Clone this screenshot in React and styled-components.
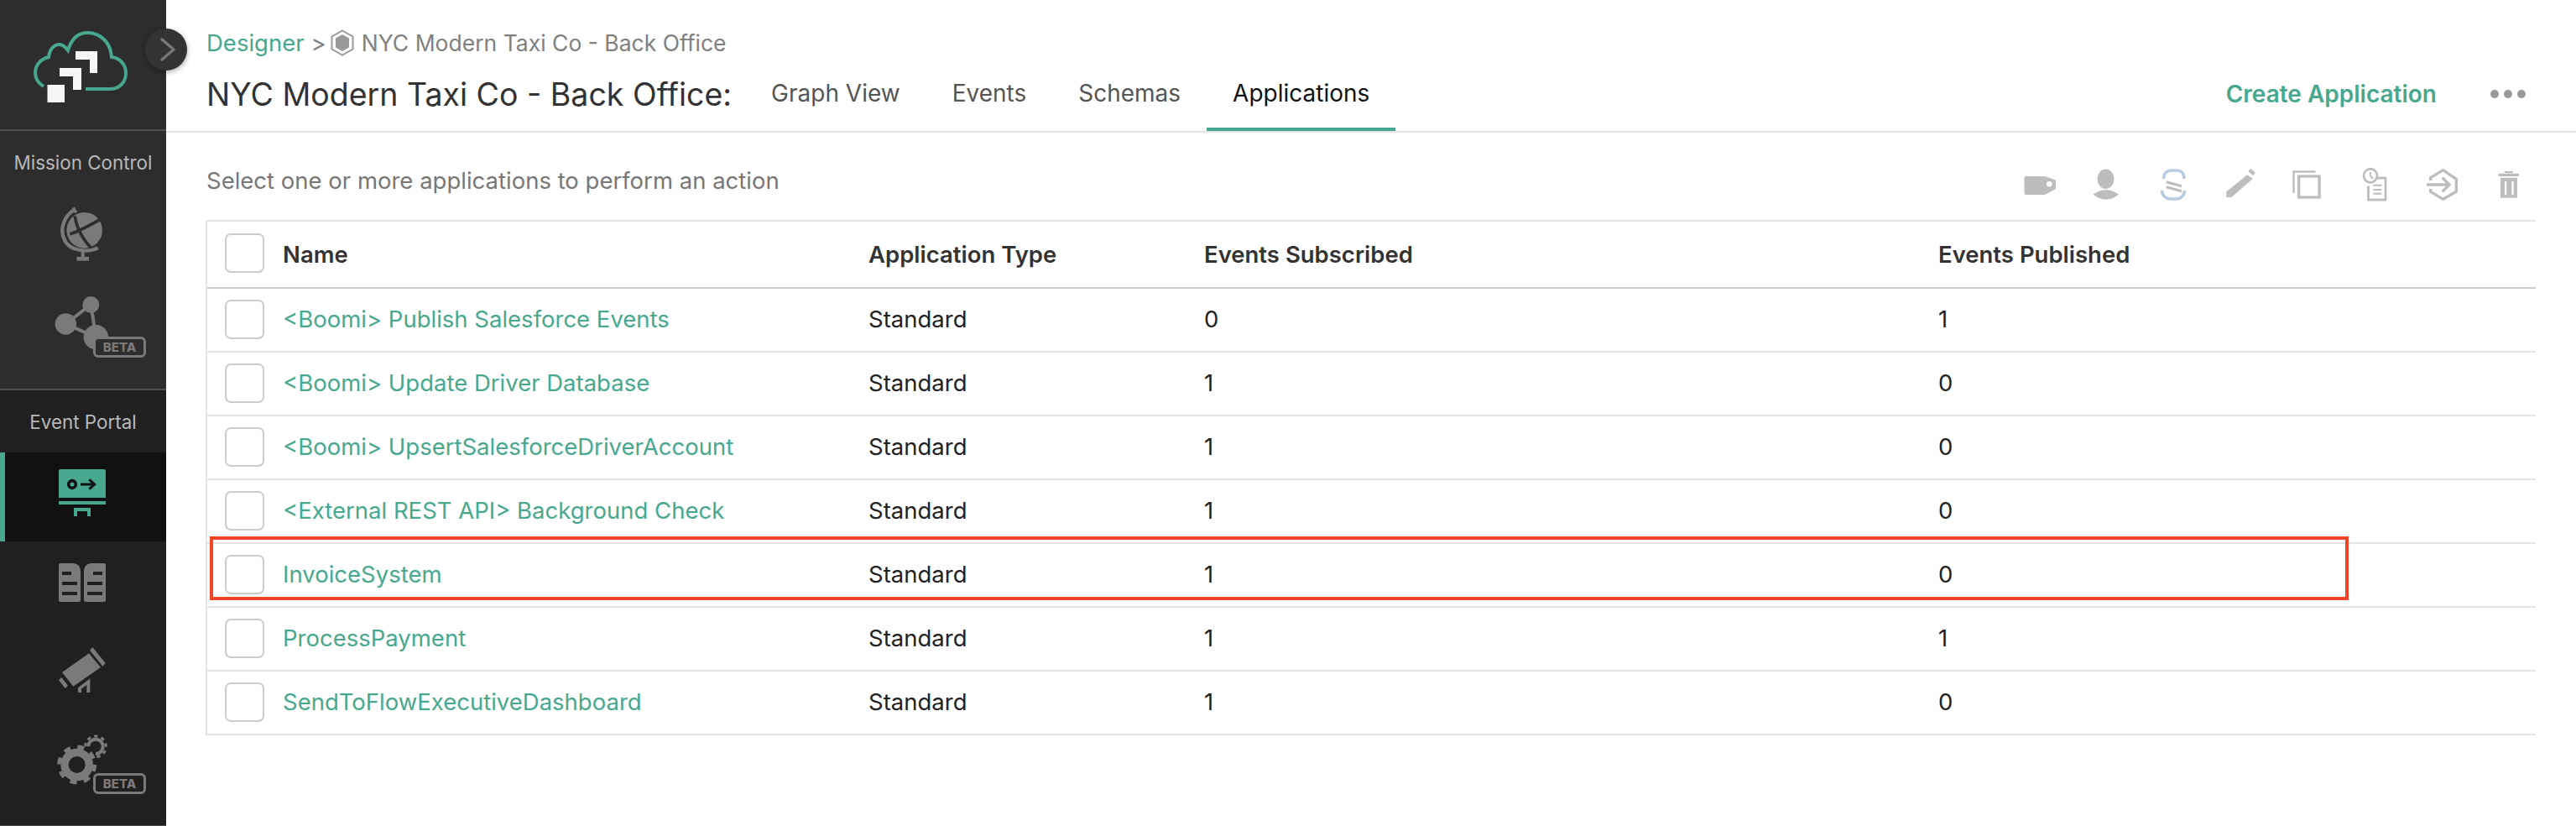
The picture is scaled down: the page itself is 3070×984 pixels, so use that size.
import React from "react"
import styled, { createGlobalStyle } from "styled-components"

const GREEN = "#47a88f"
const ICON_GREY = "#7a7a7a"
const TOOL_GREY = "#bdbdbd"
const FONT = `Inter, "Liberation Sans", sans-serif`

const GlobalStyle = createGlobalStyle`
  html, body {
    margin: 0;
    background: #fff;
    overflow: hidden;
  }
  body {
    font-family: ${FONT};
    color: #333;
  }
  * {
    box-sizing: border-box;
  }
`

const rows = [
  { name: "<Boomi> Publish Salesforce Events", subscribed: 0, published: 1 },
  { name: "<Boomi> Update Driver Database", subscribed: 1, published: 0 },
  { name: "<Boomi> UpsertSalesforceDriverAccount", subscribed: 1, published: 0 },
  { name: "<External REST API> Background Check", subscribed: 1, published: 0 },
  { name: "InvoiceSystem", subscribed: 1, published: 0 },
  { name: "ProcessPayment", subscribed: 1, published: 1 },
  { name: "SendToFlowExecutiveDashboard", subscribed: 1, published: 0 },
]

const tabs = ["Graph View", "Events", "Schemas", "Applications"]

/* sidebar drawings: the viewBox is in 3x page units, so shapes line up with the crops */
const CloudLogo = () => (
  <svg width="198" height="155" viewBox="0 0 198 155">
    <path
      d="M52 103 C44 98 42 92 42 87 C42 77 49 70 58 68 C59 59 64 53 71 53 C75 53 78 56 81 60 C85 47 93 39 104 39 C121 39 132 52 133 68 C143 69 150 77 150 87 C150 98 142 106 132 106 L102 106"
      fill="none"
      stroke={GREEN}
      strokeWidth="4"
    />
    <rect x="56.5" y="101" width="20.5" height="21" fill="#f5f5f5" />
    <polygon points="71,81 97,81 97,107 87,107 87,91 71,91" fill="#f5f5f5" />
    <polygon points="90,61 116,61 116,87 107,87 107,71 90,71" fill="#f5f5f5" />
  </svg>
)

const GlobeIcon = () => (
  <svg width="100" height="90" viewBox="147 702 300 270">
    <circle cx="302" cy="823" r="64" fill={ICON_GREY} />
    <path d="M268 748 C230 770 210 820 232 860 C250 895 310 905 350 886" fill="none" stroke={ICON_GREY} strokeWidth="13" />
    <path d="M262 742 L272 760" stroke={ICON_GREY} strokeWidth="10" />
    <path d="M250 836 C285 826 330 800 365 780" fill="none" stroke="#2d2d2d" strokeWidth="11" />
    <path d="M268 772 C272 810 295 855 325 885" fill="none" stroke="#2d2d2d" strokeWidth="11" />
    <rect x="290" y="892" width="12" height="30" fill={ICON_GREY} />
    <rect x="274" y="918" width="44" height="14" fill={ICON_GREY} />
  </svg>
)

const NetworkIcon = () => (
  <svg width="100" height="90" viewBox="147 1020 300 270">
    <path d="M235 1158 L325 1088 L343 1205 Z" fill="none" stroke={ICON_GREY} strokeWidth="12" />
    <circle cx="325" cy="1089" r="30" fill={ICON_GREY} />
    <circle cx="235" cy="1158" r="38" fill={ICON_GREY} />
    <circle cx="343" cy="1205" r="44" fill={ICON_GREY} />
  </svg>
)

const ApplicationIcon = () => (
  <svg width="100" height="90" viewBox="147 201 300 270">
    <path d="M210 243 a6 6 0 0 1 6 -6 H372 a6 6 0 0 1 6 6 V339 H210 Z" fill={GREEN} />
    <circle cx="258" cy="291" r="13" fill={GREEN} stroke="#111" strokeWidth="11" />
    <path d="M288 291 H332" stroke="#111" strokeWidth="9" />
    <path d="M319 274 L338 291 L319 308" fill="none" stroke="#111" strokeWidth="9" />
    <rect x="210" y="351" width="168" height="12" fill={GREEN} />
    <polygon points="264,375 324,375 324,405 312,405 312,387 276,387 276,405 264,405" fill={GREEN} />
  </svg>
)

const CatalogIcon = () => (
  <svg width="100" height="90" viewBox="147 519 300 270">
    <path d="M216 573 H262 a26 26 0 0 1 26 26 V705 a6 6 0 0 1 -6 6 H216 a6 6 0 0 1 -6 -6 V579 a6 6 0 0 1 6 -6 Z" fill={ICON_GREY} />
    <path d="M372 573 H326 a26 26 0 0 0 -26 26 V705 a6 6 0 0 0 6 6 H372 a6 6 0 0 0 6 -6 V579 a6 6 0 0 0 -6 -6 Z" fill={ICON_GREY} />
    <g fill="#202020">
      <rect x="222" y="603" width="33" height="12" />
      <rect x="222" y="639" width="54" height="12" />
      <rect x="222" y="675" width="54" height="12" />
      <rect x="333" y="603" width="33" height="12" />
      <rect x="312" y="639" width="54" height="12" />
      <rect x="312" y="675" width="54" height="12" />
    </g>
  </svg>
)

const TelescopeIcon = () => (
  <svg width="100" height="90" viewBox="147 837 300 270">
    <g fill={ICON_GREY}>
      <polygon points="222,963 318,895 360,945 262,1013" />
      <polygon points="331,873 377,930 367,941 321,884" />
      <polygon points="220,981 243,1010 233,1020 210,990" />
      <polygon points="279,1035 279,1018 322,985 322,1035 310,1035 310,1008 291,1022 291,1035" />
    </g>
  </svg>
)

const DesignerIcon = () => (
  <svg width="100" height="90" viewBox="147 1155 300 270">
    <g fill="none" stroke={ICON_GREY}>
      <circle cx="275" cy="1293" r="44" strokeWidth="28" />
      <circle cx="275" cy="1293" r="63" strokeWidth="15" strokeDasharray="24 25.5" />
      <path d="M316 1228 A26 26 0 1 1 342 1254" strokeWidth="12" />
      <path d="M305 1228 A37 37 0 1 1 342 1265" strokeWidth="9" strokeDasharray="13 13" />
    </g>
  </svg>
)

const ChevronRight = () => (
  <svg width="50" height="50" viewBox="0 0 50 50">
    <path d="M20 13 L34 25 L20 37" fill="none" stroke="#777" strokeWidth="3.5" strokeLinecap="round" strokeLinejoin="round" />
  </svg>
)

const HexBadge = () => (
  <svg width="28" height="32" viewBox="0 0 28 32">
    <polygon points="14,1.5 26.5,8.5 26.5,23.5 14,30.5 1.5,23.5 1.5,8.5" fill="none" stroke="#999" strokeWidth="2" />
    <polygon points="14,6 22,10.5 22,21.5 14,26 6,21.5 6,10.5" fill="#999" />
  </svg>
)

/* toolbar drawings */
const toolIcons = [
  <g key="tag">
    <path d="M2.5 12 a2 2 0 0 1 2 -2 H27 L40 14.5 V25 L27 32 H4.5 a2 2 0 0 1 -2 -2 Z" fill={TOOL_GREY} />
    <circle cx="32.3" cy="19.3" r="3.3" fill="#fff" />
  </g>,
  <g key="owner" fill={TOOL_GREY}>
    <ellipse cx="19.5" cy="13.3" rx="10" ry="11.7" />
    <path d="M4.5 31.5 Q20 21 35 31.5 Q20 44 4.5 31.5 Z" />
  </g>,
  <g key="link">
    <path d="M8.5 13 C8.5 6 13 3 18 3 H24 C29 3 33 6 33 13" fill="none" stroke="#b9cbe3" strokeWidth="3.5" />
    <path d="M6.5 27 C6.5 33 11 37 18 37 H23 C29 37 33.5 33 33.5 27" fill="none" stroke="#b9cbe3" strokeWidth="3.5" />
    <path d="M11.7 16.7 L30 21.7 M11.7 22.7 L30 27.7" stroke={TOOL_GREY} strokeWidth="3" />
  </g>,
  <g key="edit" fill={TOOL_GREY}>
    <polygon points="3.3,35 3.3,28.3 28.3,8.3 35,12.7 9.3,35" />
    <polygon points="29.3,4 32.7,0.7 37.7,6 35,9.3" />
  </g>,
  <g key="copy" fill="none" stroke={TOOL_GREY}>
    <path d="M3.5 30 V4.5 H29.5" strokeWidth="2.5" />
    <rect x="9.7" y="10" width="24.4" height="25" strokeWidth="3.3" />
  </g>,
  <g key="history" fill="none" stroke={TOOL_GREY}>
    <path d="M23 12 H33 V38 H12.5 V21.7" strokeWidth="2.8" strokeLinejoin="round" />
    <circle cx="15" cy="9.3" r="8" fill="#fff" strokeWidth="2.7" />
    <path d="M15 5 V9.5 L18 13" strokeWidth="2" />
    <path d="M18.3 20.7 H28.3 M18.3 26 H28.3 M18.3 30.7 H28.3" strokeWidth="2" />
  </g>,
  <g key="import" fill="none" stroke={TOOL_GREY} strokeWidth="3.3">
    <path d="M6.7 15 V11.7 L21.7 2.7 L37.3 13.3 V28.3 L21.7 37.3 L6.7 28.3 V25" />
    <path d="M2 20 H28 M20.7 11.7 L29 20 L20.7 28.3" />
  </g>,
  <g key="delete" fill={TOOL_GREY}>
    <rect x="15" y="4" width="10" height="2" />
    <rect x="7.7" y="6.7" width="24.3" height="3.3" />
    <path d="M10 11.7 H30 V35.7 H10 Z M15 16 V32.3 H17.3 V16 Z M23.3 16 V32.3 H25.7 V16 Z" fillRule="evenodd" />
  </g>,
]

const App = () => (
  <Page>
    <GlobalStyle />
    <Sidebar>
      <LogoBlock>
        <CloudLogo />
      </LogoBlock>
      <MissionSection>
        <SectionTitle $height={70}>Mission Control</SectionTitle>
        <NavItem>
          <GlobeIcon />
        </NavItem>
        <NavItem>
          <NetworkIcon />
          <BetaBadge $top={69} $bg="#2d2d2d">BETA</BetaBadge>
        </NavItem>
      </MissionSection>
      <PortalSection>
        <SectionTitle $height={74}>Event Portal</SectionTitle>
        <NavItem $active>
          <ApplicationIcon />
        </NavItem>
        <NavItem>
          <CatalogIcon />
        </NavItem>
        <NavItem>
          <TelescopeIcon />
        </NavItem>
        <NavItem>
          <DesignerIcon />
          <BetaBadge $top={64} $bg="#202020">BETA</BetaBadge>
        </NavItem>
      </PortalSection>
    </Sidebar>
    <Toggle>
      <ChevronRight />
    </Toggle>
    <Main>
      <Header>
        <Breadcrumb>
          <Crumb>Designer</Crumb>
          <Sep>&gt;</Sep>
          <HexBadge />
          <CrumbTitle>NYC Modern Taxi Co - Back Office</CrumbTitle>
        </Breadcrumb>
        <TitleRow>
          <Title>NYC Modern Taxi Co - Back Office:</Title>
          {tabs.map((tab) => (
            <Tab key={tab} $active={tab === "Applications"}>
              {tab}
            </Tab>
          ))}
          <Actions>
            <CreateLink>Create Application</CreateLink>
            <Dots>
              <i />
              <i />
              <i />
            </Dots>
          </Actions>
        </TitleRow>
      </Header>
      <Toolbar>
        <Hint>Select one or more applications to perform an action</Hint>
        <ToolIcons>
          {toolIcons.map((icon) => (
            <svg key={icon.key} width="40" height="40" viewBox="0 0 40 40">
              {icon}
            </svg>
          ))}
        </ToolIcons>
      </Toolbar>
      <Table>
        <HeadRow>
          <HeadCheck />
          <div>Name</div>
          <div>Application Type</div>
          <div>Events Subscribed</div>
          <div>Events Published</div>
        </HeadRow>
        {rows.map((row) => (
          <Row key={row.name}>
            <Check />
            <NameLink>{row.name}</NameLink>
            <div>Standard</div>
            <div>{row.subscribed}</div>
            <div>{row.published}</div>
          </Row>
        ))}
        <Highlight />
      </Table>
    </Main>
  </Page>
)

const Page = styled.div`
  display: flex;
  position: relative;
  width: 3070px;
  height: 984px;
`

const Sidebar = styled.nav`
  width: 198px;
  flex: none;
  display: flex;
  flex-direction: column;
  background: #202020;
  color: #b8b8b8;
`

const LogoBlock = styled.div`
  height: 156px;
  background: #2d2d2d;
  border-bottom: 2px solid #505050;
`

const MissionSection = styled.div`
  height: 309px;
  background: #2d2d2d;
  border-bottom: 2px solid #505050;
`

const PortalSection = styled.div`
  flex: 1;
  border-bottom: 1px solid #505050;
`

const SectionTitle = styled.div`
  height: ${(p) => p.$height}px;
  padding-top: ${(p) => (p.$height === 70 ? 4 : 0)}px;
  display: flex;
  align-items: center;
  justify-content: center;
  font-size: 22.4px;
  white-space: nowrap;
`

const NavItem = styled.div`
  position: relative;
  height: 106px;
  display: flex;
  align-items: center;
  justify-content: center;
  background: ${(p) => (p.$active ? "#111" : "transparent")};
  box-shadow: ${(p) => (p.$active ? `inset 6px 0 0 ${GREEN}` : "none")};
`

const BetaBadge = styled.span`
  position: absolute;
  left: 111px;
  top: ${(p) => p.$top}px;
  width: 63px;
  height: 25px;
  display: flex;
  align-items: center;
  justify-content: center;
  border: 3px solid ${ICON_GREY};
  border-radius: 6px;
  background: ${(p) => p.$bg};
  color: ${ICON_GREY};
  font-size: 15px;
  font-weight: 800;
`

const Toggle = styled.div`
  position: absolute;
  left: 173px;
  top: 34px;
  width: 50px;
  height: 50px;
  border-radius: 50%;
  background: #333;
  box-shadow: 0 2px 6px rgba(0, 0, 0, 0.35);
`

const Main = styled.main`
  flex: 1;
  min-width: 0;
`

const Header = styled.header`
  height: 158px;
  padding: 36px 0 0 48px;
  border-bottom: 2px solid #e4e4e4;
`

const Breadcrumb = styled.div`
  display: flex;
  align-items: center;
  height: 30px;
  font-size: 27.5px;
  color: #808080;
  white-space: nowrap;

  svg {
    margin: 0 9px 0 5px;
  }
`

const Crumb = styled.span`
  color: ${GREEN};
`

const CrumbTitle = styled.span`
  font-size: 26.5px;
`

const Sep = styled.span`
  margin-left: 8px;
`

const TitleRow = styled.div`
  display: flex;
  align-items: stretch;
  height: 90px;
`

const Title = styled.h1`
  margin: 2px 16px 0 0;
  display: flex;
  align-items: center;
  font-size: 37.5px;
  font-weight: 400;
  color: #333;
  white-space: nowrap;
`

const Tab = styled.div`
  display: flex;
  align-items: center;
  padding: 4px 31px 0;
  font-size: 28px;
  color: ${(p) => (p.$active ? "#111" : "#555")};
  border-bottom: 4px solid ${(p) => (p.$active ? GREEN : "transparent")};
  white-space: nowrap;
`

const Actions = styled.div`
  margin-left: auto;
  padding: 2px 60px 0 0;
  display: flex;
  align-items: center;
`

const CreateLink = styled.span`
  font-size: 28px;
  font-weight: 600;
  color: ${GREEN};
`

const Dots = styled.span`
  display: flex;
  gap: 6px;
  margin-left: 64px;

  i {
    width: 10px;
    height: 10px;
    border-radius: 50%;
    background: #999;
  }
`

const Toolbar = styled.div`
  height: 104px;
  padding: 0 60px 0 48px;
  display: flex;
  align-items: center;
  justify-content: space-between;
`

const Hint = styled.div`
  margin-top: 10px;
  font-size: 27.5px;
  color: #777;
`

const ToolIcons = styled.div`
  margin-top: 20px;
  display: flex;
  gap: 40px;
`

const Table = styled.div`
  position: relative;
  margin-left: 47px;
  width: 2777px;
  border-top: 2px solid #e4e4e4;
  border-left: 2px solid #e4e4e4;
  border-top-left-radius: 3px;
  font-size: 27.5px;
`

const RowGrid = styled.div`
  display: grid;
  grid-template-columns: 90px 698px 400px 875px 1fr;
  align-items: center;
`

const HeadRow = styled(RowGrid)`
  height: 80px;
  border-bottom: 2px solid #ccc;
  font-weight: 600;
  color: #333;
`

const Row = styled(RowGrid)`
  height: 76px;
  padding-bottom: 2px;
  border-bottom: 2px solid #e4e4e4;
  color: #222;
`

const Check = styled.span`
  display: block;
  width: 47px;
  height: 47px;
  margin-left: 21px;
  border: 2px solid #ccc;
  border-radius: 7px;
`

const HeadCheck = styled(Check)`
  margin-bottom: 4px;
`

const NameLink = styled.span`
  color: ${GREEN};
`

const Highlight = styled.div`
  position: absolute;
  left: 3px;
  top: 375px;
  width: 2549px;
  height: 76px;
  border: 4px solid #f04526;
`

export default App
